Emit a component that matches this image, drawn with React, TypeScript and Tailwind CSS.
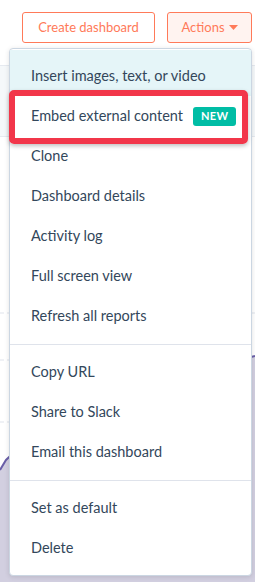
const groups: string[][] = [
  [
    'Insert images, text, or video',
    'Embed external content',
    'Clone',
    'Dashboard details',
    'Activity log',
    'Full screen view',
    'Refresh all reports',
  ],
  ['Copy URL', 'Share to Slack', 'Email this dashboard'],
  ['Set as default', 'Delete'],
];

function MenuItem({ label, index }: { label: string; index: number }) {
  const active = index === 0;
  return (
    <div
      className={`flex items-center pl-[21px] text-[14.5px] text-[#33475b] ${
        active ? 'h-[46px] bg-[#e5f5f8] pt-[6px]' : 'h-10'
      }`}
    >
      <span>{label}</span>
      {label === 'Embed external content' && (
        <span className="ml-[10px] flex h-[19px] items-center rounded-[3px] bg-[#00bda5] px-[8px] text-[11px] font-bold tracking-wide text-white">
          NEW
        </span>
      )}
    </div>
  );
}

function Chart() {
  return (
    <svg width="255" height="300" viewBox="0 0 255 300" className="block">
      {[23, 70, 132, 188, 242].map((y) => (
        <line key={y} x1="0" x2="255" y1={y} y2={y} stroke="#dfe3eb" strokeDasharray="4 3" />
      ))}
      <path d="M0 180 L6 170 L60 120 L200 80 L255 66 L255 300 L0 300 Z" fill="#d2cfe0" />
      <path d="M0 180 L6 170 L60 120 L200 80 L255 66" fill="none" stroke="#6a5fa8" strokeWidth="2" />
    </svg>
  );
}

export default function App() {
  let n = 0;
  return (
    <div
      className="relative h-[582px] w-[255px] overflow-hidden bg-white"
      style={{ fontFamily: 'Lato, "Open Sans", sans-serif' }}
    >
      {/* page behind the menu */}
      <div className="flex justify-end gap-3 pr-[3px] pt-3">
        <button className="h-[31px] w-[133px] rounded-[3px] border border-[#ff7a59] bg-white text-[13px] text-[#ff7a59]">
          Create dashboard
        </button>
        <button className="flex h-[31px] w-[85px] items-center justify-center gap-1 rounded-[3px] border border-[#ff7a59] bg-[#fff3f0] text-[13px] text-[#ff7a59]">
          Actions
          <svg width="9" height="5" viewBox="0 0 9 5">
            <path d="M0 0h9L4.5 5z" fill="#ff7a59" />
          </svg>
        </button>
      </div>
      <div className="mt-[22px] h-[72px] w-full border-y border-[#e6eaf0] bg-[#f5f8fa]" />
      <div className="h-[153px]" />
      <Chart />

      {/* dropdown menu */}
      <div className="absolute left-[9px] top-[48px] w-[243px] rounded-[4px] border border-[#cbd6e2] bg-white pb-[7px] pt-[1px] shadow-[0_1px_5px_rgba(0,0,0,0.12)]">
        {groups.map((g, gi) => (
          <div key={gi}>
            {gi > 0 && <div className="mb-[7px] mt-[8px] border-t border-[#dfe3eb]" />}
            {g.map((label) => (
              <MenuItem key={label} label={label} index={n++} />
            ))}
          </div>
        ))}
      </div>

      {/* highlight box */}
      <div className="absolute left-[9px] top-[90px] h-[54px] w-[239px] rounded-[5px] border-[6px] border-[#f2364a] shadow-[0_2px_4px_rgba(0,0,0,0.25)]" />
    </div>
  );
}
